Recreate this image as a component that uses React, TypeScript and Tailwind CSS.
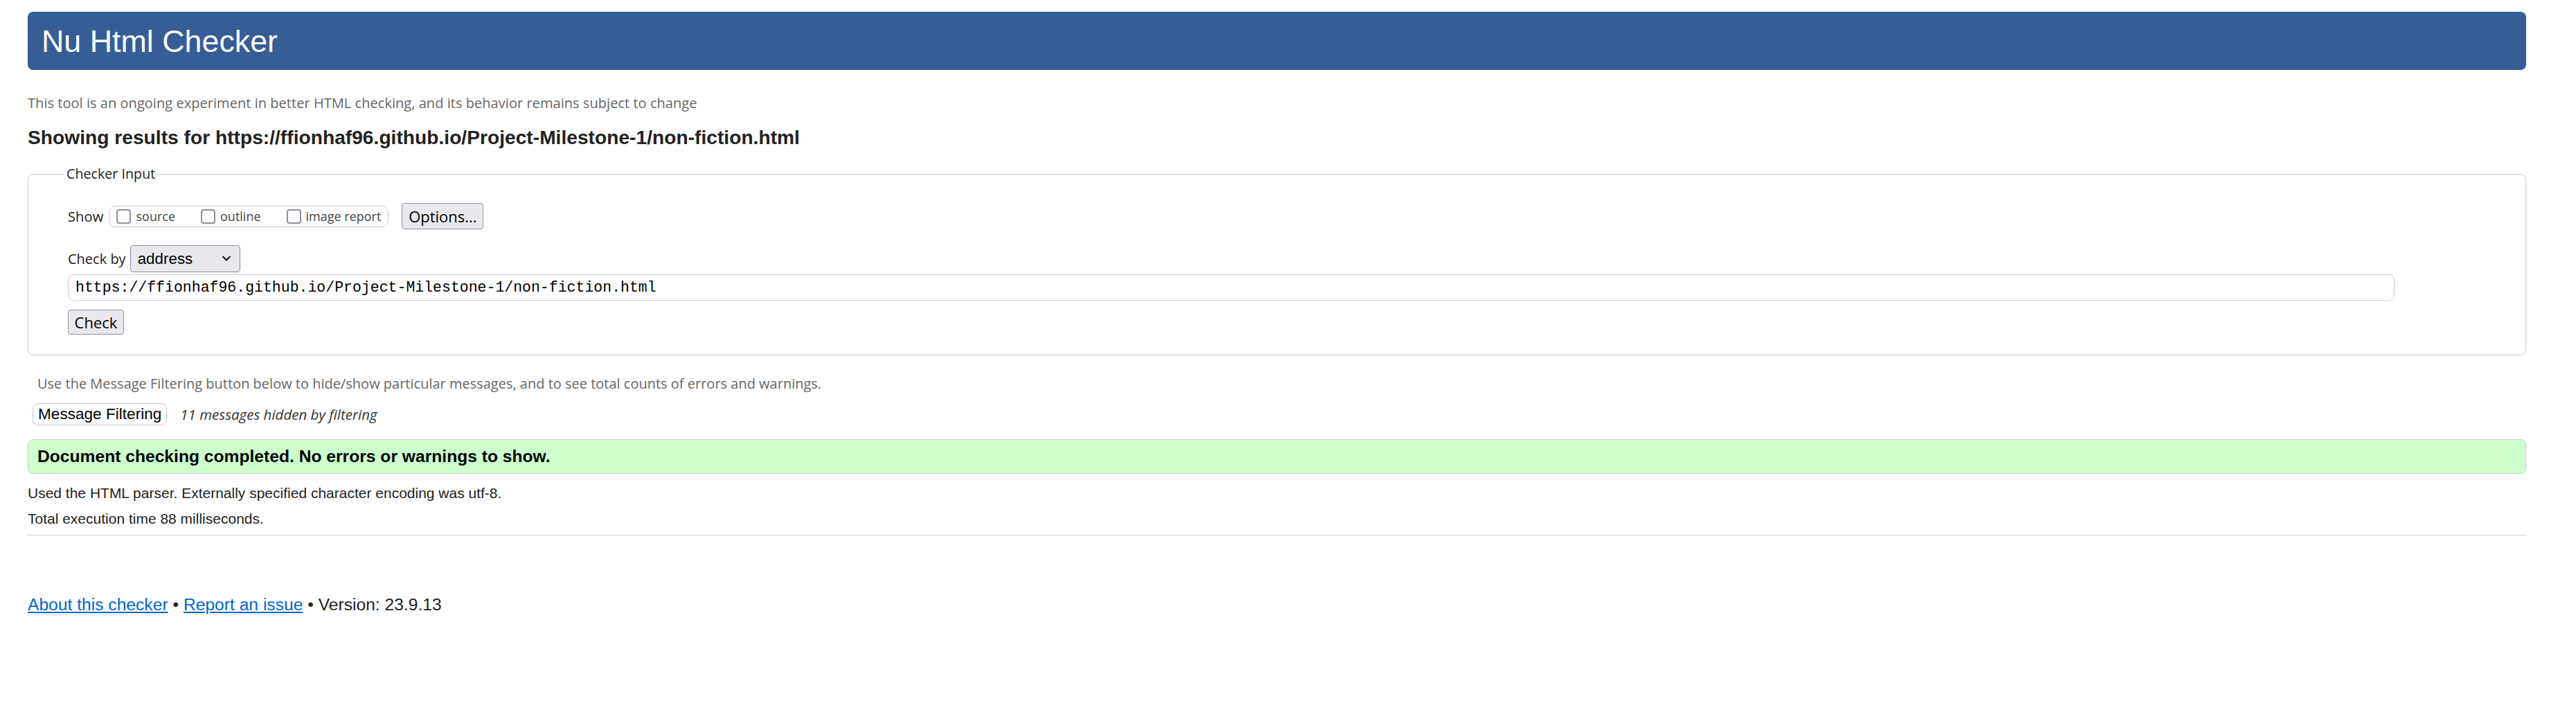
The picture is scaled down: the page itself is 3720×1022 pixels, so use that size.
import React from 'react';

const url = 'https://ffionhaf96.github.io/Project-Milestone-1/non-fiction.html';

function Check({ label }: { label: string }) {
  return (
    <label className="flex items-center gap-[7px] text-[18px] leading-none text-[#444]">
      <input type="checkbox" className="h-[21px] w-[21px] appearance-none rounded-[4px] border-2 border-[#8f8f9d] bg-white" />
      <span>{label}</span>
    </label>
  );
}

export default function App() {
  return (
    <div className="min-h-[1022px] bg-white pl-[40px] pr-[72px] pt-[17px] font-['Liberation_Sans',Arial,sans-serif] text-[#222]">
      <h1 className="flex h-[84px] items-center rounded-[8px] bg-[#365d95] pl-[20px] text-[44.8px] leading-none text-white">
        Nu Html Checker
      </h1>

      <p className="mt-[33px] h-[30px] font-['Open_Sans',sans-serif] text-[20.1px] leading-[30px] text-[#666]">
        This tool is an ongoing experiment in better HTML checking, and its behavior remains subject to change
      </p>

      <h2 className="mt-[19px] h-[30px] text-[28.2px] font-bold leading-[30px]">Showing results for {url}</h2>

      <fieldset className="mt-[24px] rounded-[8px] border border-[#ccc] pb-[29px] pl-[57px] pr-[20px] pt-[28px]">
        <legend className="-ml-[5px] px-[3px] font-['Open_Sans',sans-serif] text-[19.7px] leading-[28px] text-[#222]">
          Checker Input
        </legend>

        <div className="flex h-[38px] items-center font-['Open_Sans',sans-serif]">
          <span className="text-[20.3px]">Show</span>
          <div className="ml-[8px] flex h-[31px] items-center gap-[37px] rounded-[10px] border border-[#ccc] px-[10px]">
            <Check label="source" />
            <Check label="outline" />
            <Check label="image report" />
          </div>
          <button className="ml-[19px] h-[38px] w-[118px] rounded-[4px] border border-[#8f8f9d] bg-[#e9e9ed] text-[22px] leading-none text-black">
            Options...
          </button>
        </div>

        <div className="mt-[23px] flex h-[39px] items-center">
          <span className="font-['Open_Sans',sans-serif] text-[20px]">Check by</span>
          <div className="relative ml-[6px] h-[39px] w-[159px]">
            <select className="h-full w-full appearance-none rounded-[4px] border border-[#8f8f9d] bg-[#e9e9ed] pl-[10px] text-[22.4px] text-black">
              <option>address</option>
            </select>
            <svg className="pointer-events-none absolute right-[13px] top-[14px] h-[10px] w-[14px]" viewBox="0 0 14 10" fill="none">
              <polyline points="1.5,2 7,7.5 12.5,2" stroke="#111" strokeWidth="2" />
            </svg>
          </div>
        </div>

        <input
          readOnly
          value={url}
          className="mt-[3px] block h-[38px] w-[3360px] rounded-[8px] border border-[#ccc] bg-white px-[10px] font-['Liberation_Mono',monospace] text-[21.5px] text-black outline-none"
        />

        <button className="mt-[13px] block h-[36px] w-[81px] rounded-[4px] border border-[#8f8f9d] bg-[#e9e9ed] font-['Open_Sans',sans-serif] text-[22px] leading-none text-black">
          Check
        </button>
      </fieldset>

      <p className="mt-[26px] h-[30px] pl-[14px] font-['Open_Sans',sans-serif] text-[20px] leading-[30px] text-[#666]">
        Use the Message Filtering button below to hide/show particular messages, and to see total counts of errors and warnings.
      </p>

      <div className="mt-[13px] flex h-[32px] items-center">
        <button className="ml-[7px] h-[32px] rounded-[8px] border border-[#ccc] bg-white px-[7px] text-[22.6px] leading-none text-black">
          Message Filtering
        </button>
        <span className="ml-[19px] font-['Open_Sans',sans-serif] text-[20.5px] italic text-[#333]">11 messages hidden by filtering</span>
      </div>

      <div className="mt-[20px] flex h-[50px] items-center rounded-[8px] border border-[#ccc] bg-[#ccffcc] pl-[13px]">
        <span className="text-[24.64px] font-bold text-black">Document checking completed. No errors or warnings to show.</span>
      </div>

      <p className="mt-[16px] h-[24px] text-[21px] leading-[24px]">
        Used the HTML parser. Externally specified character encoding was utf-8.
      </p>
      <p className="mt-[13px] h-[24px] text-[21px] leading-[24px]">Total execution time 88 milliseconds.</p>

      <hr className="mt-[11px] border-0 border-t border-dotted border-[#aaa]" />

      <p className="mt-[85px] h-[30px] text-[24.64px] leading-[30px] text-[#222]">
        <a href="#" className="text-[#0066cc] underline">About this checker</a>
        {' • '}
        <a href="#" className="text-[#0066cc] underline">Report an issue</a>
        {' • Version: 23.9.13'}
      </p>
    </div>
  );
}
